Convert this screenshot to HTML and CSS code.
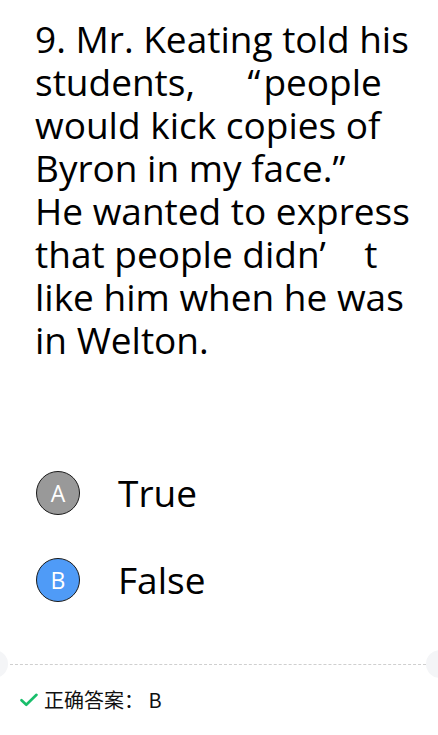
FILE: index.html
```html
<!DOCTYPE html>
<html lang="zh-CN">
<head>
<meta charset="utf-8">
<title>Question 9</title>
<link rel="stylesheet" href="styles.css">
</head>
<body>
<main class="question">
  <p class="stem">9. Mr. Keating told his<br>students,<span class="q-open">“</span>people<br>would kick copies of<br>Byron in my face.<span class="q-close">”</span><br>He wanted to express<br>that people didn<span class="q-close">’</span> t<br>like him when he was<br>in Welton.</p>
  <ul class="options">
    <li class="option">
      <span class="badge badge-gray">A</span>
      <span class="label">True</span>
    </li>
    <li class="option">
      <span class="badge badge-blue">B</span>
      <span class="label">False</span>
    </li>
  </ul>
</main>
<footer class="result">
  <div class="divider"></div>
  <div class="answer">
    <svg class="check" width="18" height="14" viewBox="0 0 18 14"><path d="M1.5 7.2 L6.3 11.8 L16.5 1.8" fill="none" stroke="#19be6b" stroke-width="2.6" stroke-linecap="round" stroke-linejoin="round"/></svg>
    <span class="answer-text">正确答案： B</span>
  </div>
</footer>
</body>
</html>
```

FILE: styles.css
```css
html, body {
  margin: 0;
  padding: 0;
  background: #ffffff;
}

body {
  width: 438px;
  overflow-x: hidden;
  font-family: "Open Sans", "Noto Sans CJK SC", sans-serif;
  color: #000;
}

.question {
  padding: 17px 20px 0 35px;
}

.stem {
  margin: 0;
  font-size: 37px;
  line-height: 43px;
  white-space: nowrap;
}

/* full-width (CJK style) quotation cells */
.q-open {
  display: inline-block;
  width: 1.85em;
  padding-right: 0.08em;
  box-sizing: border-box;
  text-align: right;
}

.q-close {
  display: inline-block;
  width: 0.95em;
  text-align: left;
}

.options {
  list-style: none;
  margin: 110px 0 0 0;
  padding: 0;
  display: flex;
  flex-direction: column;
  gap: 43px;
}

.option {
  display: flex;
  align-items: center;
  gap: 38px;
  height: 44px;
}

.badge {
  box-sizing: border-box;
  width: 44px;
  height: 44px;
  margin-left: 1px;
  border-radius: 50%;
  border: 1px solid #1a1a1a;
  display: flex;
  align-items: center;
  justify-content: center;
  color: #fff;
  font-size: 23px;
  line-height: 1;
}

.badge-gray {
  background: #999999;
}

.badge-blue {
  background: #4f9bf7;
}

.label {
  font-size: 37px;
  line-height: 44px;
}

.result {
  margin-top: 62px;
}

.divider {
  position: relative;
  margin: 0 12px 0 10px;
  border-top: 1px dashed #cfcfcf;
  height: 0;
}

.divider::before,
.divider::after {
  content: "";
  position: absolute;
  top: -15px;
  width: 28px;
  height: 28px;
  border-radius: 50%;
  background: #f4f5f7;
}

.divider::before {
  left: -30px;
}

.divider::after {
  right: -28px;
}

.answer {
  display: flex;
  align-items: center;
  gap: 6px;
  padding-left: 20px;
  margin-top: 24px;
  height: 22px;
}

.check {
  display: block;
}

.answer-text {
  font-family: "Noto Sans CJK SC", sans-serif;
  font-size: 20px;
  line-height: 22px;
  color: #111;
}
```
